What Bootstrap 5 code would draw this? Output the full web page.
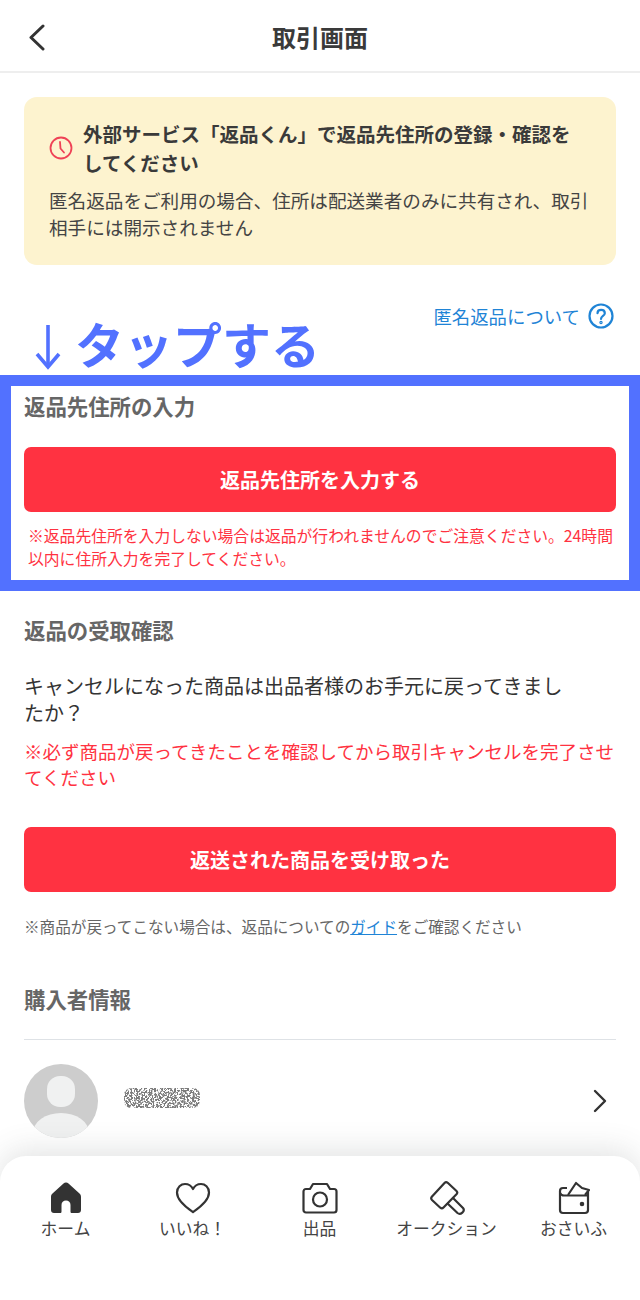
<!DOCTYPE html>
<html lang="ja">
<head>
    <meta charset="UTF-8">
    <title>取引画面</title>
    <link href="https://cdn.jsdelivr.net/npm/bootstrap@5.3.3/dist/css/bootstrap.min.css" rel="stylesheet">
    <style>
        body { font-family: "Noto Sans CJK JP", "Liberation Sans", sans-serif; color: #333; background: #fff; height: 1300px; overflow: hidden; position: relative; }
        .top-bar { height: 73px; border-bottom: 2px solid #eee; padding: 3px 24px 0; position: relative; }
        .top-title { font-size: 24px; font-weight: 700; line-height: 1; color: #3a3a3a; }
        .back-btn { position: absolute; left: 26px; top: 24px; line-height: 0; }
        .notice-box { background: #fdf3cf; border-radius: 13px; margin: 24px 24px 0; height: 168px; padding: 22px 24px 0 25px; }
        .notice-title { font-size: 19.5px; font-weight: 700; line-height: 29px; color: #3a3a3a; padding-right: 15px; }
        .notice-clock { margin-right: 10px; }
        .notice-body { font-size: 18.6px; line-height: 27px; color: #444; margin-top: 9px; }
        .about-link { font-size: 18.4px; color: #1f84d6; margin: 37px 26px 0 0; height: 28px; line-height: 28px; }
        .tap-label { color: #5271ff; font-size: 49px; font-weight: 700; line-height: 50px; margin: -12px 0 0 35px; height: 50px; }
        .tap-arrow { margin: 6px 14px 0 0; }
        .blue-frame { border: 11px solid #5271ff; height: 216px; padding: 0 13px; margin-top: 7px; }
        .sec-title { font-size: 21.4px; font-weight: 700; color: #666; line-height: 30px; }
        .frame-title { margin-top: 5px; }
        .red-btn { background: #ff3241; color: #fff; font-size: 20px; font-weight: 700; height: 65px; border-radius: 7px; border: 0; width: 100%; }
        .red-btn:hover, .red-btn:active { background: #ff3241 !important; color: #fff !important; }
        .frame-btn { margin-top: 26px; }
        .frame-note { font-size: 15.8px; line-height: 23px; color: #ff3241; margin: 12px 0 0 4px; }
        .lower-part { padding: 0 24px; }
        .receive-title { margin-top: 24px; }
        .question-text { font-size: 20px; line-height: 27px; margin-top: 27px; padding-right: 50px; }
        .warn-text { font-size: 18.5px; line-height: 26px; color: #ff3241; margin-top: 12px; }
        .return-btn { margin-top: 37px; }
        .guide-note { font-size: 15.6px; line-height: 22px; color: #666; margin-top: 23px; }
        .guide-note a { color: #1f84d6; }
        .buyer-title { margin-top: 47px; padding-bottom: 25px; }
        .buyer-row { margin-top: 24px; }
        .avatar-circle { width: 74px; height: 74px; border-radius: 50%; overflow: hidden; flex: none; }
        .blur-name { margin: 0 0 6px 24px; }
        .row-chevron { margin-right: 8px; }
        .tab-bar { position: absolute; left: 0; right: 0; top: 1156px; bottom: 0; background: #fff; border-radius: 26px 26px 0 0; box-shadow: 0 -6px 30px rgba(80, 90, 90, .16); padding: 25px 0 0 2px; }
        .tab-item { width: 127px; font-size: 16.8px; line-height: 20px; color: #444; white-space: nowrap; }
        .tab-icon { height: 34px; margin-bottom: 3px; }
    </style>
</head>
<body>

<!-- header -->
<div class="top-bar d-flex align-items-center justify-content-center">
    <span class="back-btn">
        <svg width="22" height="28" viewBox="0 0 22 28" fill="none" stroke="#333" stroke-width="3" stroke-linecap="round" stroke-linejoin="round"><path d="M17 2 L5 13.5 L17 25"/></svg>
    </span>
    <div class="top-title">取引画面</div>
</div>

<!-- notice -->
<div class="notice-box">
    <div class="d-flex align-items-center">
        <svg class="flex-shrink-0 notice-clock" width="24" height="24" viewBox="0 0 24 24" fill="none" stroke="#ef4256" stroke-width="1.8" stroke-linecap="round"><circle cx="12" cy="12" r="10.5"/><path d="M11 6 L11.5 12.5 L15 16.5"/></svg>
        <div class="notice-title">外部サービス「返品くん」で返品先住所の登録・確認をしてください</div>
    </div>
    <div class="notice-body">匿名返品をご利用の場合、住所は配送業者のみに共有され、取引相手には開示されません</div>
</div>

<div class="about-link d-flex justify-content-end align-items-center">
    <span>匿名返品について</span>
    <svg class="ms-2" width="26" height="26" viewBox="0 0 26 26" fill="none" stroke="#1f84d6" stroke-width="2.2"><circle cx="13" cy="13" r="11.5"/><path d="M9.5 10.2 C9.5 5.8 16.8 5.8 16.8 10.2 C16.8 13 13 13 13 16" stroke-linecap="round"/><circle cx="13" cy="19.5" r=".6"/></svg>
</div>

<div class="tap-label d-flex align-items-start">
    <svg class="tap-arrow flex-shrink-0" width="26" height="46" viewBox="0 0 26 46" fill="none" stroke="#5271ff" stroke-width="3.6"><path d="M13 1 V42"/><path d="M2 30 L13 43 L24 30"/></svg>
    <span>タップする</span>
</div>

<!-- address input -->
<div class="blue-frame">
    <div class="sec-title frame-title">返品先住所の入力</div>
    <button type="button" class="btn red-btn frame-btn d-block">返品先住所を入力する</button>
    <div class="frame-note">※返品先住所を入力しない場合は返品が行われませんのでご注意ください。24時間以内に住所入力を完了してください。</div>
</div>

<!-- receive check -->
<div class="lower-part">
    <div class="sec-title receive-title">返品の受取確認</div>
    <div class="question-text">キャンセルになった商品は出品者様のお手元に戻ってきましたか？</div>
    <div class="warn-text">※必ず商品が戻ってきたことを確認してから取引キャンセルを完了させてください</div>
    <button type="button" class="btn red-btn return-btn d-block">返送された商品を受け取った</button>
    <div class="guide-note">※商品が戻ってこない場合は、返品についての<a href="#">ガイド</a>をご確認ください</div>
    <div class="sec-title buyer-title border-bottom">購入者情報</div>
    <div class="buyer-row d-flex align-items-center">
        <div class="avatar-circle">
            <svg width="74" height="74" viewBox="0 0 74 74"><rect width="74" height="74" fill="#cdcdcd"/><rect x="23" y="12" width="28" height="31" rx="13" fill="#f0f1f1"/><ellipse cx="37" cy="69" rx="28" ry="20" fill="#f0f1f1"/></svg>
        </div>
        <svg class="blur-name" width="80" height="30" viewBox="0 0 80 30">
            <filter id="noiseFx" x="0" y="0" width="100%" height="100%"><feTurbulence type="fractalNoise" baseFrequency=".55" numOctaves="3" seed="7"/><feColorMatrix values="0 0 0 0 .2  0 0 0 0 .2  0 0 0 0 .2  7 7 0 0 -6.4"/><feComposite in2="SourceGraphic" operator="in"/></filter>
            <rect x="2" y="5" width="76" height="20" rx="7" filter="url(#noiseFx)"/>
        </svg>
        <svg class="ms-auto row-chevron" width="16" height="24" viewBox="0 0 16 24" fill="none" stroke="#333" stroke-width="2.4" stroke-linecap="round" stroke-linejoin="round"><path d="M3 2 L13 12 L3 22"/></svg>
    </div>
</div>

<!-- bottom tabs -->
<div class="tab-bar d-flex">
    <div class="tab-item d-flex flex-column align-items-center">
        <div class="tab-icon"><svg width="30" height="33" viewBox="2 0 30 33"><path fill="#333" d="M17 1.5 C18 1.5 18.8 2 19.5 2.6 L30.5 12.5 C31.6 13.5 32 14.5 32 16 V29 C32 31 30.8 32 29 32 H23 C21.9 32 21.5 31.4 21.5 30.4 V24 C21.5 21.4 19.6 19.6 17 19.6 C14.4 19.6 12.5 21.4 12.5 24 V30.4 C12.5 31.4 12.1 32 11 32 H5 C3.2 32 2 31 2 29 V16 C2 14.5 2.4 13.5 3.5 12.5 L14.5 2.6 C15.2 2 16 1.5 17 1.5 Z"/></svg></div>
        <span>ホーム</span>
    </div>
    <div class="tab-item d-flex flex-column align-items-center">
        <div class="tab-icon"><svg width="36" height="34" viewBox="0 0 36 34" fill="none" stroke="#333" stroke-width="2.2" stroke-linejoin="round"><path d="M18 31 C16 29.5 2 21 2 11.5 C2 6 6 3 10 3 C13.5 3 16.5 5 18 8 C19.5 5 22.5 3 26 3 C30 3 34 6 34 11.5 C34 21 20 29.5 18 31 Z"/></svg></div>
        <span>いいね！</span>
    </div>
    <div class="tab-item d-flex flex-column align-items-center">
        <div class="tab-icon"><svg width="36" height="34" viewBox="0 0 36 34" fill="none" stroke="#333" stroke-width="2.2" stroke-linejoin="round"><path d="M4 8 H8 L11 3 H25 L28 8 H32 C33.5 8 34.5 9 34.5 10.5 V29 C34.5 30.5 33.5 31.5 32 31.5 H4 C2.5 31.5 1.5 30.5 1.5 29 V10.5 C1.5 9 2.5 8 4 8 Z"/><circle cx="18" cy="18.5" r="7"/></svg></div>
        <span>出品</span>
    </div>
    <div class="tab-item d-flex flex-column align-items-center">
        <div class="tab-icon"><svg width="36" height="35" viewBox="-1 0 36 35" fill="none" stroke="#333" stroke-width="2.2" stroke-linejoin="round"><path d="M14.5 2 C15.5 1 16.7 1 17.7 1.8 L26.5 10 C27.5 11 27.5 12 26.7 13 L13.5 26.5 C12.5 27.5 11.3 27.5 10.3 26.7 L2 19 C1 18 1 16.8 1.8 15.8 Z"/><path d="M22.5 16.5 L33 27 C35.5 30 30.5 34.5 27.5 32 L17 22"/></svg></div>
        <span>オークション</span>
    </div>
    <div class="tab-item d-flex flex-column align-items-center">
        <div class="tab-icon"><svg width="32" height="34" viewBox="0 0 32 34" fill="none" stroke="#333" stroke-width="2.2" stroke-linejoin="round"><path d="M9 7 H5 C3 7 2 8 2 10 V29 C2 31 3 32 5 32 H27 C29 32 30 31 30 29 V11"/><path d="M2 12 C3 14 4 14.5 6 14.5 H30"/><path d="M10 14 L18 2 L24 7 L31 9 L27 14"/><circle cx="24" cy="23" r="1.2" fill="#333"/></svg></div>
        <span>おさいふ</span>
    </div>
</div>

<script src="https://cdn.jsdelivr.net/npm/bootstrap@5.3.3/dist/js/bootstrap.bundle.min.js"></script>
</body>
</html>
